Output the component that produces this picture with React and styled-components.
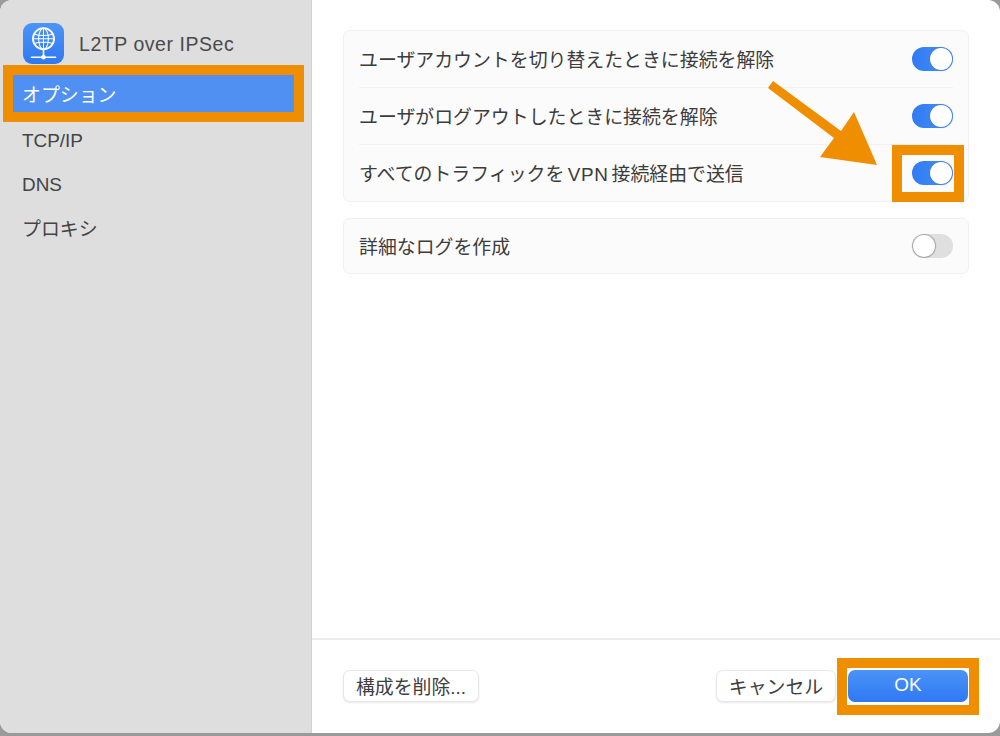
import React from "react";
import styled, { createGlobalStyle } from "styled-components";

const Global = createGlobalStyle`
  html, body { margin: 0; padding: 0; background: #8a8a8a; }
  body { font-family: "Liberation Sans", "Noto Sans CJK JP", sans-serif; }
  * { box-sizing: border-box; }
`;
const Stage = styled.div`
  position: relative; width: 1000px; height: 736px; overflow: hidden; background: #9a9a9a;
`;
const Win = styled.div`
  display: flex; width: 1000px; height: 733px; border-radius: 12px; overflow: hidden; background: #fff;
`;
const Side = styled.aside`
  width: 312px; flex: none; background: #dedede; border-right: 1px solid #d2d2d2; padding: 23px 17px 0 13px;
`;
const Head = styled.div`
  display: flex; align-items: center; gap: 15px; padding-left: 10px; height: 41px; margin-bottom: 11px;
`;
const AppIcon = styled.div`
  width: 41px; height: 41px; border-radius: 9px; flex: none; display: flex; align-items: center; justify-content: center;
  background: linear-gradient(180deg, #4b95f8, #2f78f2);
`;
const Title = styled.div`
  font-size: 19.5px; color: #4a4a4a; letter-spacing: .55px; white-space: nowrap; padding-top: 1px;
`;
const NavItem = styled.div`
  height: ${p => p.$h || 43}px; display: flex; align-items: center; padding-left: 9px; font-size: 18.9px;
  color: ${p => (p.$active ? "#fff" : "#444")};
  background: ${p => (p.$active ? "#5090f3" : "transparent")};
  margin-bottom: ${p => p.$mb || 0}px;
`;
const Main = styled.main`
  flex: 1; display: flex; flex-direction: column; min-width: 0;
`;
const Content = styled.div`
  flex: 1; padding: 30px 31px 0; display: flex; flex-direction: column; gap: 16px;
`;
const Card = styled.section`
  background: #fbfbfb; border: 1px solid #f0f0f0; border-radius: 7px; padding: 0 15px;
`;
const Row = styled.div`
  height: ${p => p.$h || 57}px; display: flex; align-items: center; justify-content: space-between;
  font-size: 18.9px; color: #3c3c3c;
  & + & { border-top: 1px solid #f1f1f1; }
`;
const Label = styled.span`
  white-space: nowrap; margin-bottom: 2px;
`;
const Latin = styled.span`
  margin: 0 3px 0 3.5px; letter-spacing: .6px;
`;
const Toggle = styled.span`
  position: relative; width: 41px; height: 24px; border-radius: 12px; flex: none;
  background: ${p => (p.$on ? "linear-gradient(90deg,#2f7bf3,#4a90f6)" : "#dfdfdf")};
  &::after {
    content: ""; position: absolute; top: 1px; width: 22px; height: 22px; border-radius: 50%; background: #fff;
    left: ${p => (p.$on ? "18px" : "1px")};
    box-shadow: 0 0 1px 1px ${p => (p.$on ? "rgba(60,120,230,.55)" : "rgba(0,0,0,.28)")};
  }
`;
const Footer = styled.footer`
  height: 95px; flex: none; border-top: 2px solid #ececec; padding: 30px 32px 0 31px; display: flex; align-items: flex-start;
`;
const Button = styled.button`
  height: 32px; padding: 0 0 2px; width: ${p => p.$w}px; border-radius: 7px; font: inherit; font-size: 18.9px; color: #3e3e3e;
  background: #fff; border: 1px solid #e8e8e8; box-shadow: 0 1px 2px rgba(0,0,0,.1);
  display: flex; align-items: center; justify-content: center; white-space: nowrap;
`;
const Primary = styled(Button)`
  color: #fff; border: 0; box-shadow: none; background: linear-gradient(180deg, #4a93f8, #2f78f3);
`;
const Spacer = styled.div`flex: 1;`;
const Gap = styled.div`width: 12px; flex: none;`;
const Mark = styled.div`
  position: absolute; border: 10px solid #ee8e00;
  left: ${p => p.$x}px; top: ${p => p.$y}px; width: ${p => p.$w}px; height: ${p => p.$h}px;
`;
const Arrow = styled.svg`
  position: absolute; left: 0; top: 0; pointer-events: none;
`;

const Globe = () => (
  <svg width="35" height="37" viewBox="0 0 33 35" fill="none" stroke="#fff" strokeLinecap="round">
    <circle cx="16.5" cy="13" r="10" strokeWidth="1.7" />
    <ellipse cx="16.5" cy="13" rx="4.6" ry="10" strokeWidth="1" />
    <path d="M16.5 3v20M7.5 8.5c5 2 13 2 18 0M6.5 13h20M7.5 17.5c5-2 13-2 18 0" strokeWidth="1" />
    <path d="M16.5 23v7" strokeWidth="1.5" />
    <path d="M5 30.5h23" strokeWidth="1.3" />
    <circle cx="16.5" cy="30.5" r="2.2" fill="#fff" stroke="none" />
  </svg>
);

export default function App() {
  return (
    <Stage>
      <Global />
      <Win>
        <Side>
          <Head>
            <AppIcon><Globe /></AppIcon>
            <Title>L2TP over IPSec</Title>
          </Head>
          <NavItem $active $h={37} $mb={7}>オプション</NavItem>
          <NavItem $h={44}>TCP/IP</NavItem>
          <NavItem $h={44}>DNS</NavItem>
          <NavItem $h={40}>プロキシ</NavItem>
        </Side>
        <Main>
          <Content>
            <Card>
              <Row $h={56}><Label>ユーザアカウントを切り替えたときに接続を解除</Label><Toggle $on /></Row>
              <Row $h={57}><Label>ユーザがログアウトしたときに接続を解除</Label><Toggle $on /></Row>
              <Row $h={57}><Label>すべてのトラフィックを<Latin>VPN</Latin>接続経由で送信</Label><Toggle $on /></Row>
            </Card>
            <Card>
              <Row $h={54}><Label>詳細なログを作成</Label><Toggle /></Row>
            </Card>
          </Content>
          <Footer>
            <Button $w={136}>構成を削除...</Button>
            <Spacer />
            <Button $w={120}>キャンセル</Button>
            <Gap />
            <Primary $w={120}>OK</Primary>
          </Footer>
        </Main>
      </Win>
      <Mark $x={3} $y={65} $w={301} $h={57} />
      <Mark $x={892} $y={145} $w={72} $h={57} />
      <Mark $x={837} $y={658} $w={142} $h={57} />
      <Arrow width="1000" height="736" viewBox="0 0 1000 736">
        <polygon fill="#ee8e00" points="768,88 773,81 841,131 854,112 877,165 820,157 834,138" />
      </Arrow>
    </Stage>
  );
}
